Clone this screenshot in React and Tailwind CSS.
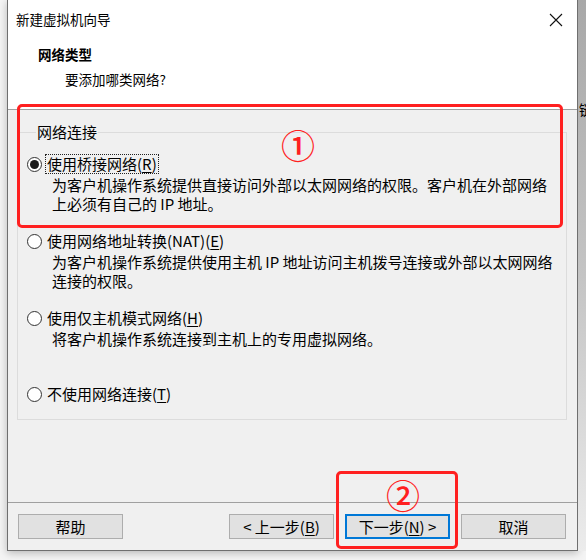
import React from 'react';

const font = "font-['Noto_Sans_CJK_SC','Noto_Sans',sans-serif]";

function Radio({ checked }) {
  return (
    <span className="w-[15px] h-[15px] rounded-full border border-[#333333] bg-white flex items-center justify-center shrink-0">
      {checked && <span className="w-[9px] h-[9px] rounded-full bg-[#1a1a1a]" />}
    </span>
  );
}

function Key({ k }) {
  return (
    <>
      (<span className="underline underline-offset-2">{k}</span>)
    </>
  );
}

function Option({ checked, focus, label, lines, className = '' }) {
  return (
    <div className={className}>
      <div className="flex items-center h-[20px] gap-[4px] -ml-[1px]">
        <Radio checked={checked} />
        <span
          className={
            'leading-[18px] px-[1px] ' +
            (focus ? 'outline outline-1 outline-dotted outline-[#222]' : '')
          }
        >
          {label}
        </span>
      </div>
      {lines && (
        <div className="pl-[24px] mt-[1px] leading-[19px]">
          {lines.map((l, i) => (
            <div key={i}>{l}</div>
          ))}
        </div>
      )}
    </div>
  );
}

function Btn({ children, primary }) {
  return (
    <button
      className={
        'h-[25px] w-[105px] bg-[#e1e1e1] text-[15px] leading-none text-black flex items-center justify-center ' +
        (primary ? 'border-2 border-[#0078d7]' : 'border border-[#adadad]')
      }
    >
      {children}
    </button>
  );
}

export default function App() {
  return (
    <div className={'relative w-[586px] h-[560px] bg-[#f4f4f4] overflow-hidden flex ' + font}>
      <div className="ml-[7px] w-[571px] h-[551px] flex flex-col border-x border-b border-[#6f6f6f] bg-[#f0f0f0] shadow-[0_2px_8px_rgba(0,0,0,0.25)] text-black">
        {/* header */}
        <div className="h-[110px] bg-white border-b border-[#a0a0a0] relative">
          <div className="flex items-center justify-between h-[40px] pl-[8px] pr-[14px]">
            <span className="text-[13.5px] leading-none">新建虚拟机向导</span>
            <svg width="14" height="14" viewBox="0 0 14 14" className="mt-[-1px]">
              <path d="M1 1L13 13M13 1L1 13" stroke="#111" strokeWidth="1.1" />
            </svg>
          </div>
          <div className="pl-[30px] pt-[5px] text-[13.5px] font-bold leading-[18px]">网络类型</div>
          <div className="pl-[57px] pt-[7px] text-[13.5px] leading-[18px]">要添加哪类网络?</div>
        </div>

        {/* body */}
        <div className="flex-1 pt-[12px] pl-[9px] text-[15px]">
          <fieldset className="w-[550px] border border-[#dcdcdc] pl-[10px] pb-[15px]">
            <legend className="ml-[8px] px-[1px] leading-[20px]">网络连接</legend>
            <Option
              className="pt-[12px]"
              checked
              focus
              label={<>使用桥接网络<Key k="R" /></>}
              lines={['为客户机操作系统提供直接访问外部以太网网络的权限。客户机在外部网络', '上必须有自己的 IP 地址。']}
            />
            <Option
              className="mt-[18px]"
              label={<>使用网络地址转换(NAT)<Key k="E" /></>}
              lines={['为客户机操作系统提供使用主机 IP 地址访问主机拨号连接或外部以太网网络', '连接的权限。']}
            />
            <Option
              className="mt-[18px]"
              label={<>使用仅主机模式网络<Key k="H" /></>}
              lines={['将客户机操作系统连接到主机上的专用虚拟网络。']}
            />
            <Option className="mt-[36px]" label={<>不使用网络连接<Key k="T" /></>} />
          </fieldset>
        </div>

        {/* footer */}
        <div className="h-[48px] border-t border-[#a0a0a0] flex items-start pt-[11px] pl-[10px] pr-[11px]">
          <Btn>帮助</Btn>
          <div className="ml-auto flex gap-[11px]">
            <Btn>&lt; 上一步<Key k="B" /></Btn>
            <Btn primary>下一步<Key k="N" /> &gt;</Btn>
            <Btn>取消</Btn>
          </div>
        </div>
      </div>

      {/* window behind, right edge */}
      <div className="flex-1 h-[551px] bg-gradient-to-b from-[#a8a8a8] via-[#c4c4c4] to-[#ececec] overflow-hidden">
        <div className="mt-[102px] ml-[1px] text-[15px] leading-none text-black">链</div>
      </div>

      {/* annotation overlays */}
      <div className="absolute left-[17px] top-[104px] w-[546px] h-[124px] border-[3px] border-[#ff2020] rounded-[5px] pointer-events-none" />
      <div className="absolute left-[281px] top-[128px] text-[#ff2020] text-[34px] font-medium leading-none">①</div>
      <div className="absolute left-[336px] top-[471px] w-[122px] h-[78px] border-[3px] border-[#ff2020] rounded-[5px] pointer-events-none" />
      <div className="absolute left-[386px] top-[478px] text-[#ff2020] text-[34px] font-medium leading-none">②</div>
    </div>
  );
}
